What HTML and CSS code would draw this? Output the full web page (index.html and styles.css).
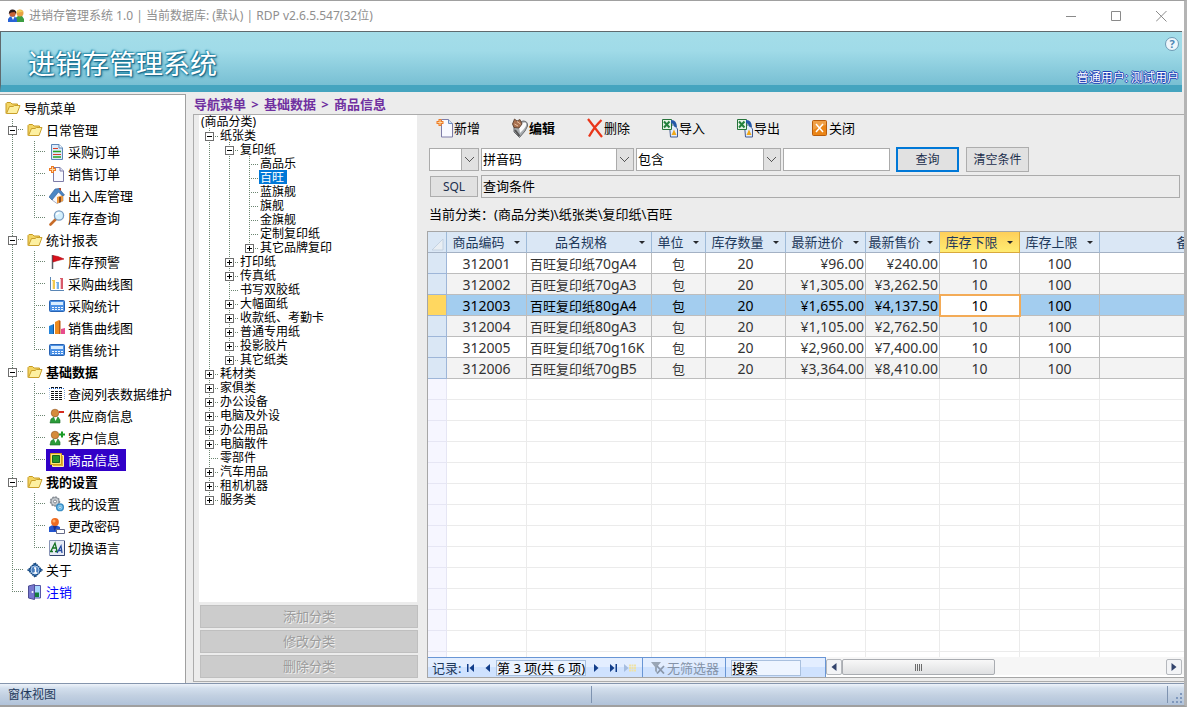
FILE: index.html
```html
<!DOCTYPE html>
<html lang="zh-CN">
<head>
<meta charset="utf-8">
<title>进销存管理系统</title>
<link rel="stylesheet" href="styles.css">
</head>
<body>
<svg class="sprite" aria-hidden="true">
  <symbol id="folder" viewBox="0 0 16 16"><path d="M1 13.500V3.500L2 2.500H5.500L7 4H12.500V6.500" fill="#f3d564" stroke="#c79b22"/><path d="M1.500 13.500L4.500 6.500H8L9.500 5.500H15L12 13.500Z" fill="#fdf0a0" stroke="#c99f2a"/></symbol>
  <symbol id="doc" viewBox="0 0 16 16"><path d="M2.500.500H10L13.500 4V15.500H2.500Z" fill="#dcebfa" stroke="#5d87b8"/><path d="M10 .500V4H13.500" fill="#fff" stroke="#5d87b8"/><path d="M4 4.500H9M4 10.500H12" stroke="#d6402b"/><path d="M4 7.500H12M4 13H12" stroke="#27a322" stroke-width="1.500"/></symbol>
  <symbol id="newdoc" viewBox="0 0 16 16"><path d="M4.500 1.500H11L14.500 5V15.500H4.500Z" fill="#f8f9ff" stroke="#7e7ca8"/><path d="M11 1.500V5H14.500" fill="#dfe4f5" stroke="#7e7ca8"/><path d="M3.500 0V7M0 3.500H7" stroke="#ee7b24" stroke-width="3"/><path d="M3.500 1V6M1 3.500H6" stroke="#ffd7a0"/></symbol>
  <symbol id="newitem" viewBox="0 0 18 20"><path d="M5.500 1.500H12.500L16.500 5.500V19H5.500Z" fill="#f8f9ff" stroke="#7e7ca8"/><path d="M12.500 1.500V5.500H16.500" fill="#cfe0f5" stroke="#6d8cc0"/><path d="M4 1V8M.500 4.500H7.500" stroke="#ee7b24" stroke-width="3"/><path d="M4 2V7M1.500 4.500H6.500" stroke="#ffd7a0"/></symbol>
  <symbol id="house" viewBox="0 0 16 16"><path d="M3 7L9 3L14 7V13L8 15.500L3 12Z" fill="#f7f7fb" stroke="#8994ad" stroke-width=".700"/><path d="M8 9L14 7V13L8 15.500Z" fill="#ef9a3c"/><path d="M0 9L6 1L10 .500L15.500 7L13.500 8L9.500 4L3 12Z" fill="#4a86c5" stroke="#315c92" stroke-width=".600"/><path d="M10 9H12V14L10 15Z" fill="#874b22"/><path d="M10 0H12V3L10 1Z" fill="#b7482c"/></symbol>
  <symbol id="lens" viewBox="0 0 16 16"><path d="M7 9L1.500 14.500" stroke="#c76c29" stroke-width="2.600" stroke-linecap="round"/><circle cx="10" cy="5.500" r="4.600" fill="#d5f0fd" stroke="#7a9dc1" stroke-width="1.300"/><path d="M7.500 5Q8 2.800 10.500 2.800" fill="none" stroke="#fff" stroke-width="1.500"/></symbol>
  <symbol id="flag" viewBox="0 0 16 16"><path d="M3.500 1V15" stroke="#5b5b63" stroke-width="1.500"/><path d="M4 1.500L9 2.500L15 5L9 6.500L4 8Z" fill="#d9101b" stroke="#b00814" stroke-width=".600"/></symbol>
  <symbol id="bars" viewBox="0 0 16 16"><path d="M1.500 1V14.500H15" fill="none" stroke="#5a86b5"/><path d="M3 4H6V13H3Z" fill="#f2c94e"/><path d="M7 6H10V13H7Z" fill="#79b3e8"/><path d="M11 2H14V13H11Z" fill="#d85a6a"/><path d="M3.500 5V13M7.500 7V13M11.500 3V13" stroke="#fff" opacity=".7"/></symbol>
  <symbol id="calc" viewBox="0 0 16 16"><rect x=".500" y="2.500" width="15" height="11" rx="1" fill="#4c91e5" stroke="#2763b4"/><path d="M2 4H14V7H2Z" fill="#d9edff"/><path d="M3 9.500H14M3 11.500H14" stroke="#f2f8ff" stroke-dasharray="2 1"/></symbol>
  <symbol id="chart" viewBox="0 0 16 16"><path d="M0 6L5 4V14H0Z" fill="#2384db"/><path d="M6 2L10 0V14H6Z" fill="#ee8c20"/><path d="M10 0L11.500 1V14H10Z" fill="#bb5b10"/><path d="M12 9L16 8V14H12Z" fill="#e84c8d"/><path d="M4 4L5 5V14H4Z" fill="#12569b"/></symbol>
  <symbol id="list" viewBox="0 0 16 16"><path d="M0 2.500H16" stroke="#1b61c5" stroke-dasharray="1 1"/><path d="M0 4V14M15.500 4V14" stroke="#7da3d8" stroke-dasharray="1 1"/><path d="M2 1.500H14M2 5.500H14M2 7.500H14M2 9.500H14M2 11.500H14M2 13.500H14" stroke="#111" stroke-dasharray="3 1"/></symbol>
  <symbol id="person" viewBox="0 0 16 16"><path d="M1 15L2 11L5 9H9L11 12V15Z" fill="#2b9c39" stroke="#176925" stroke-width=".600"/><path d="M5 9L6.500 13L8.500 9Z" fill="#fff"/><circle cx="6" cy="5" r="3.800" fill="#d58b3b" stroke="#8e501c" stroke-width=".600"/></symbol>
  <symbol id="supplier" viewBox="0 0 16 16"><use href="#person"/><path d="M10 4H15" stroke="#d62b1f" stroke-width="2"/></symbol>
  <symbol id="customer" viewBox="0 0 16 16"><use href="#person"/><path d="M10 4.500H16M13 1.500V7.500" stroke="#199b25" stroke-width="2"/></symbol>
  <symbol id="goods" viewBox="0 0 16 16"><path d="M3.500 3.500H14.500V14.500H3.500Z" fill="#e0b338" stroke="#fff2a6"/><path d="M1.500 1.500H12.500V12.500H1.500Z" fill="#ffe477" stroke="#d19b1b"/><path d="M3.500 3.500H10.500V10.500H3.500Z" fill="#23942b" stroke="#17641d"/></symbol>
  <symbol id="gears" viewBox="0 0 16 16"><circle cx="6" cy="5.500" r="4" fill="#ccd1d6" stroke="#9aa0a7" stroke-width="1.500"/><circle cx="6" cy="5.500" r="4.500" fill="none" stroke="#868d94" stroke-width="1.500" stroke-dasharray="1.500 1.500"/><circle cx="6" cy="5.500" r="1.500" fill="#fff" stroke="#7e858d"/><circle cx="11" cy="11.300" r="3.300" fill="#8cd2f5" stroke="#3a8ec6" stroke-width="1.500"/><circle cx="11" cy="11.300" r="1.200" fill="#fff" stroke="#287eb8" stroke-width=".600"/></symbol>
  <symbol id="password" viewBox="0 0 16 16"><path d="M0 14V9Q5 5 11 9V14Z" fill="#2455cf"/><path d="M4 8L5.500 13L8 8Z" fill="#1e308a"/><circle cx="6" cy="4" r="3.900" fill="#ed6b22"/><circle cx="5" cy="3" r="1.500" fill="#ffac65"/><path d="M7.500 11.500H15.500V15.500H7.500Z" fill="#fff" stroke="#666b88"/></symbol>
  <symbol id="language" viewBox="0 0 16 16"><path d="M.500.500H15.500V15.500H.500Z" fill="#e7ebf6" stroke="#8995b7"/><path d="M15.500 1V15.500H1" fill="none" stroke="#344470"/><path d="M2 11L6 3L8 11M3 8H8M1 11.500H4M6 11.500H9" fill="none" stroke="#177325" stroke-width="1.300"/><path d="M8 13L12 6L13 13M9.500 10.500H13" fill="none" stroke="#244aa0" stroke-width="1.300"/></symbol>
  <symbol id="about" viewBox="0 0 16 16"><path d="M8 1L15 8L8 15L1 8Z" fill="#205da0" stroke="#17477c" stroke-width="1.500" stroke-dasharray="1.500 .700"/><circle cx="8" cy="8" r="4" fill="#4c7fbd" stroke="#a9c8ec"/><path d="M7 6H8.500V11M6.500 11H10" fill="none" stroke="#fff" stroke-width="1.400"/></symbol>
  <symbol id="logout" viewBox="0 0 16 16"><path d="M7.500 1.500H13.500V14H7.500Z" fill="#a7d7ff" stroke="#5757a5"/><path d="M8 8.500H12V13H8Z" fill="#13803a"/><path d="M1.500 2L7.500.500V15.500L1.500 14Z" fill="#7777cf" stroke="#4c4c94"/><circle cx="5.500" cy="8" r="1" fill="#fff"/></symbol>
  <symbol id="users" viewBox="0 0 16 16"><path d="M7.500 14V10L10 8H14L16 11V14Z" fill="#3c9d42"/><circle cx="12" cy="5" r="3.500" fill="#e8a244"/><path d="M8.500 4Q10 0 15.500 3.500Q12 4 8.500 5Z" fill="#f0cf57"/><path d="M0 14V11L2 8.500H7L9 11V14Z" fill="#2863d6"/><path d="M3.500 9L5 12L6.500 9Z" fill="#fff"/><circle cx="4.500" cy="5.500" r="3.200" fill="#c76235"/><path d="M.800 6Q1 1 5 1.500Q9 2 8 6L6.500 4L3 4.500Z" fill="#2b1b1c"/></symbol>
  <symbol id="edit" viewBox="0 0 18 20"><path d="M3 7L12 3Q17 3 16.500 8L14 13L8.500 19.500L3 14Z" fill="#a9adb0" stroke="#6b6d70"/><path d="M8 9Q12 3 15 5Q16 8 12 12L9 15Z" fill="#fbfcfd"/><path d="M4 12L8.500 18" stroke="#555" stroke-width="2"/><path d="M3.500 1L6 3L9 1.500L11 6L8 10L3 9.500L1.500 6Z" fill="#a9704f" stroke="#50372a" stroke-width=".800"/><path d="M3.500 6L7 8M6 3.500L9.500 6" stroke="#e8c3a4"/></symbol>
  <symbol id="delete" viewBox="0 0 18 20"><path d="M2 1L16 19M15.500 2Q8 9 3 18.500" fill="none" stroke="#e9361a" stroke-width="2.200"/></symbol>
  <symbol id="excel" viewBox="0 0 18 20"><path d="M8.500 7H13L16.500 11V19H9.500Z" fill="#e2ecfb" stroke="#435b91"/><path d="M1.500 1.500H10.500V11.500H1.500Z" fill="#e7f4e8" stroke="#26733a"/><path d="M3 3.500L8.500 9.500M8.500 3.500L3 9.500" stroke="#23813d" stroke-width="2"/><path d="M10 2Q15.500 1.500 16 9H13.500Q13 5 10 5.500Z" fill="#2458a8"/><path d="M13 11.500L15.500 17H10.500Z" fill="#f0a719"/></symbol>
  <symbol id="close" viewBox="0 0 18 20"><rect x="1.500" y="2.500" width="14" height="15" rx="1" fill="#ea8517" stroke="#b85c0b"/><path d="M2 3H15V7Q8 8 2 12Z" fill="#f0a046"/><path d="M5 6L12 14M12 6L5 14" stroke="#fff" stroke-width="1.500"/></symbol>
  <symbol id="caret" viewBox="0 0 6 3"><path d="M0 0H6L3 3Z" fill="#26282c"/></symbol>
</svg>
<div class="window">
  <header class="titlebar">
    <svg class="icon"><use href="#users"/></svg>
    <span class="caption">进销存管理系统 1.0 | 当前数据库: (默认) | RDP v2.6.5.547(32位)</span>
    <button class="winbtn" aria-label="最小化"><svg viewBox="0 0 11 11"><path d="M0 5.500H10"/></svg></button>
    <button class="winbtn" aria-label="最大化"><svg viewBox="0 0 11 11"><path d="M.500.500H9.500V9.500H.500Z"/></svg></button>
    <button class="winbtn" aria-label="关闭窗口"><svg viewBox="0 0 11 11"><path d="M0 0L10.500 10.500M10.500 0L0 10.500"/></svg></button>
  </header>
  <div class="banner">
    <h1>进销存管理系统</h1>
    <div class="banner-side">
      <button class="help" aria-label="帮助">?</button>
      <a class="user" href="#user">普通用户: 测试用户</a>
    </div>
  </div>
  <div class="body">
    <nav class="nav">
      <a class="item root" href="#"><svg class="icon"><use href="#folder"/></svg>导航菜单</a>
      <ul class="tree">
        <li>
          <div class="row"><button class="toggle" aria-label="折叠"></button><a class="item" href="#"><svg class="icon"><use href="#folder"/></svg>日常管理</a></div>
          <ul>
            <li><a class="item" href="#"><svg class="icon"><use href="#doc"/></svg>采购订单</a></li>
            <li><a class="item" href="#"><svg class="icon"><use href="#newdoc"/></svg>销售订单</a></li>
            <li><a class="item" href="#"><svg class="icon"><use href="#house"/></svg>出入库管理</a></li>
            <li><a class="item" href="#"><svg class="icon"><use href="#lens"/></svg>库存查询</a></li>
          </ul>
        </li>
        <li>
          <div class="row"><button class="toggle" aria-label="折叠"></button><a class="item" href="#"><svg class="icon"><use href="#folder"/></svg>统计报表</a></div>
          <ul>
            <li><a class="item" href="#"><svg class="icon"><use href="#flag"/></svg>库存预警</a></li>
            <li><a class="item" href="#"><svg class="icon"><use href="#bars"/></svg>采购曲线图</a></li>
            <li><a class="item" href="#"><svg class="icon"><use href="#calc"/></svg>采购统计</a></li>
            <li><a class="item" href="#"><svg class="icon"><use href="#chart"/></svg>销售曲线图</a></li>
            <li><a class="item" href="#"><svg class="icon"><use href="#calc"/></svg>销售统计</a></li>
          </ul>
        </li>
        <li>
          <div class="row"><button class="toggle" aria-label="折叠"></button><a class="item strong" href="#"><svg class="icon"><use href="#folder"/></svg>基础数据</a></div>
          <ul>
            <li><a class="item" href="#"><svg class="icon"><use href="#list"/></svg>查阅列表数据维护</a></li>
            <li><a class="item" href="#"><svg class="icon"><use href="#supplier"/></svg>供应商信息</a></li>
            <li><a class="item" href="#"><svg class="icon"><use href="#customer"/></svg>客户信息</a></li>
            <li><a class="item current" href="#"><svg class="icon"><use href="#goods"/></svg>商品信息</a></li>
          </ul>
        </li>
        <li>
          <div class="row"><button class="toggle" aria-label="折叠"></button><a class="item strong" href="#"><svg class="icon"><use href="#folder"/></svg>我的设置</a></div>
          <ul>
            <li><a class="item" href="#"><svg class="icon"><use href="#gears"/></svg>我的设置</a></li>
            <li><a class="item" href="#"><svg class="icon"><use href="#password"/></svg>更改密码</a></li>
            <li><a class="item" href="#"><svg class="icon"><use href="#language"/></svg>切换语言</a></li>
          </ul>
        </li>
        <li><div class="row leaf"><a class="item" href="#"><svg class="icon"><use href="#about"/></svg>关于</a></div></li>
        <li><div class="row leaf"><a class="item logout" href="#"><svg class="icon"><use href="#logout"/></svg>注销</a></div></li>
      </ul>
    </nav>
    <main class="main">
      <div class="crumbs"><a href="#">导航菜单</a><span>&gt;</span><a href="#">基础数据</a><span>&gt;</span><a href="#">商品信息</a></div>
      <div class="form">
        <section class="categories">
          <div class="cats">
            <a class="top" href="#">(商品分类)</a>
            <ul>
              <li><div class="row"><button class="toggle" aria-label="折叠"></button><a href="#">纸张类</a></div>
                <ul>
                  <li><div class="row"><button class="toggle" aria-label="折叠"></button><a href="#">复印纸</a></div>
                    <ul>
                      <li><div class="row leaf"><a href="#">高品乐</a></div></li>
                      <li><div class="row leaf"><a class="chosen" href="#">百旺</a></div></li>
                      <li><div class="row leaf"><a href="#">蓝旗舰</a></div></li>
                      <li><div class="row leaf"><a href="#">旗舰</a></div></li>
                      <li><div class="row leaf"><a href="#">金旗舰</a></div></li>
                      <li><div class="row leaf"><a href="#">定制复印纸</a></div></li>
                      <li><div class="row"><button class="toggle plus" aria-label="展开"></button><a href="#">其它品牌复印</a></div></li>
                    </ul>
                  </li>
                  <li><div class="row"><button class="toggle plus" aria-label="展开"></button><a href="#">打印纸</a></div></li>
                  <li><div class="row"><button class="toggle plus" aria-label="展开"></button><a href="#">传真纸</a></div></li>
                  <li><div class="row leaf"><a href="#">书写双胶纸</a></div></li>
                  <li><div class="row"><button class="toggle plus" aria-label="展开"></button><a href="#">大幅面纸</a></div></li>
                  <li><div class="row"><button class="toggle plus" aria-label="展开"></button><a href="#">收款纸、考勤卡</a></div></li>
                  <li><div class="row"><button class="toggle plus" aria-label="展开"></button><a href="#">普通专用纸</a></div></li>
                  <li><div class="row"><button class="toggle plus" aria-label="展开"></button><a href="#">投影胶片</a></div></li>
                  <li><div class="row"><button class="toggle plus" aria-label="展开"></button><a href="#">其它纸类</a></div></li>
                </ul>
              </li>
              <li><div class="row"><button class="toggle plus" aria-label="展开"></button><a href="#">耗材类</a></div></li>
              <li><div class="row"><button class="toggle plus" aria-label="展开"></button><a href="#">家俱类</a></div></li>
              <li><div class="row"><button class="toggle plus" aria-label="展开"></button><a href="#">办公设备</a></div></li>
              <li><div class="row"><button class="toggle plus" aria-label="展开"></button><a href="#">电脑及外设</a></div></li>
              <li><div class="row"><button class="toggle plus" aria-label="展开"></button><a href="#">办公用品</a></div></li>
              <li><div class="row"><button class="toggle plus" aria-label="展开"></button><a href="#">电脑散件</a></div></li>
              <li><div class="row leaf"><a href="#">零部件</a></div></li>
              <li><div class="row"><button class="toggle plus" aria-label="展开"></button><a href="#">汽车用品</a></div></li>
              <li><div class="row"><button class="toggle plus" aria-label="展开"></button><a href="#">租机机器</a></div></li>
              <li><div class="row"><button class="toggle plus" aria-label="展开"></button><a href="#">服务类</a></div></li>
            </ul>
          </div>
          <div class="cat-actions">
            <button disabled>添加分类</button>
            <button disabled>修改分类</button>
            <button disabled>删除分类</button>
          </div>
        </section>
        <section class="detail">
          <div class="toolbar">
            <button><svg class="tool"><use href="#newitem"/></svg>新增</button>
            <button class="strong"><svg class="tool"><use href="#edit"/></svg>编辑</button>
            <button><svg class="tool"><use href="#delete"/></svg>删除</button>
            <button><svg class="tool"><use href="#excel"/></svg>导入</button>
            <button><svg class="tool"><use href="#excel"/></svg>导出</button>
            <button><svg class="tool"><use href="#close"/></svg>关闭</button>
          </div>
          <div class="filters">
            <div class="fields">
              <select class="logic" aria-label="逻辑"><option></option></select>
              <select class="field" aria-label="字段"><option>拼音码</option></select>
              <select class="operator" aria-label="运算符"><option>包含</option></select>
              <input class="value" type="text" aria-label="查询值">
            </div>
            <div class="commands">
              <button class="btn default">查询</button>
              <button class="btn">清空条件</button>
            </div>
          </div>
          <div class="sql">
            <button class="btn">SQL</button>
            <input type="text" value="查询条件" aria-label="查询条件" readonly>
          </div>
          <p class="path">当前分类：(商品分类)\纸张类\复印纸\百旺</p>
          <div class="sheet">
            <div class="grid">
              <table>
                <colgroup><col class="c-sel"><col class="c-std"><col class="c-name"><col class="c-unit"><col class="c-std"><col class="c-std"><col class="c-sale"><col class="c-std"><col class="c-std"><col class="c-note"></colgroup>
                <thead>
                  <tr>
                    <th class="corner"><svg viewBox="0 0 18 20"><path d="M15 7V18H4Z" fill="#e9eef3" stroke="#b9c9da" stroke-width=".700"/></svg></th>
                    <th><div>商品编码<svg><use href="#caret"/></svg></div></th>
                    <th><div>品名规格<svg><use href="#caret"/></svg></div></th>
                    <th><div>单位<svg><use href="#caret"/></svg></div></th>
                    <th><div>库存数量<svg><use href="#caret"/></svg></div></th>
                    <th><div>最新进价<svg><use href="#caret"/></svg></div></th>
                    <th><div>最新售价<svg><use href="#caret"/></svg></div></th>
                    <th class="hot"><div>库存下限<svg><use href="#caret"/></svg></div></th>
                    <th><div>库存上限<svg><use href="#caret"/></svg></div></th>
                    <th><div>备注<svg><use href="#caret"/></svg></div></th>
                  </tr>
                </thead>
                <tbody>
                  <tr><td></td><td>312001</td><td class="name">百旺复印纸<span>70gA4</span></td><td class="unit">包</td><td>20</td><td class="money">¥96.00</td><td class="money">¥240.00</td><td>10</td><td>100</td><td></td></tr>
                  <tr class="alt"><td></td><td>312002</td><td class="name">百旺复印纸<span>70gA3</span></td><td class="unit">包</td><td>20</td><td class="money">¥1,305.00</td><td class="money">¥3,262.50</td><td>10</td><td>100</td><td></td></tr>
                  <tr class="picked"><td></td><td>312003</td><td class="name">百旺复印纸<span>80gA4</span></td><td class="unit">包</td><td>20</td><td class="money">¥1,655.00</td><td class="money">¥4,137.50</td><td class="cursor">10</td><td>100</td><td></td></tr>
                  <tr class="alt"><td></td><td>312004</td><td class="name">百旺复印纸<span>80gA3</span></td><td class="unit">包</td><td>20</td><td class="money">¥1,105.00</td><td class="money">¥2,762.50</td><td>10</td><td>100</td><td></td></tr>
                  <tr><td></td><td>312005</td><td class="name">百旺复印纸<span>70g16K</span></td><td class="unit">包</td><td>20</td><td class="money">¥2,960.00</td><td class="money">¥7,400.00</td><td>10</td><td>100</td><td></td></tr>
                  <tr class="alt"><td></td><td>312006</td><td class="name">百旺复印纸<span>70gB5</span></td><td class="unit">包</td><td>20</td><td class="money">¥3,364.00</td><td class="money">¥8,410.00</td><td>10</td><td>100</td><td></td></tr>
                </tbody>
                <tbody class="blank"></tbody>
              </table>
            </div>
            <div class="sheetbar">
              <div class="records">
                <span class="lbl">记录:</span>
                <button aria-label="第一条"><svg viewBox="0 0 8 8"><path d="M0 0H1.500V8H0ZM7 0V8L2.500 4Z"/></svg></button>
                <button aria-label="上一条"><svg viewBox="0 0 8 8"><path d="M6 0V8L1.500 4Z"/></svg></button>
                <input class="position" type="text" value="第 3 项(共 6 项)" aria-label="当前记录">
                <button aria-label="下一条"><svg viewBox="0 0 8 8"><path d="M2 0V8L6.500 4Z"/></svg></button>
                <button aria-label="最后一条"><svg viewBox="0 0 8 8"><path d="M1 0V8L5.500 4ZM6.500 0H8V8H6.500Z"/></svg></button>
                <button class="add" aria-label="新记录" disabled><svg viewBox="0 0 12 8"><path d="M0 0V8L4.500 4Z" fill="#a5bde0"/><path d="M5 1.500H12M5 4H12M5 6.500H12" stroke="#eee2a8" stroke-width="2" stroke-dasharray="2 .500"/></svg></button>
              </div>
              <button class="nofilter" disabled><svg viewBox="0 0 14 12"><path d="M0 0H10L6 5V11L4 9V5Z" fill="#9aa6b5"/><path d="M6 4L13 11.500M13 4L6 11.500" stroke="#8b98ab" stroke-width="1.800"/></svg>无筛选器</button>
              <div class="search"><input type="text" value="搜索" aria-label="搜索"></div>
              <div class="scroll">
                <button aria-label="向左滚动"><svg viewBox="0 0 8 8"><path d="M6.500 0V8L1.500 4Z"/></svg></button>
                <div class="track"><div class="thumb"></div></div>
                <button aria-label="向右滚动"><svg viewBox="0 0 8 8"><path d="M1.500 0V8L6.500 4Z"/></svg></button>
              </div>
            </div>
          </div>
        </section>
      </div>
    </main>
  </div>
  <footer class="status">
    <span class="view">窗体视图</span>
    <span class="pane"></span>
    <svg class="grip" viewBox="0 0 12 12"><path d="M8 0H10V2H8ZM4 4H6V6H4ZM8 4H10V6H8ZM0 8H2V10H0ZM4 8H6V10H4ZM8 8H10V10H8Z" fill="#7f98bd"/></svg>
  </footer>
</div>
<script src="script.js"></script>
</body>
</html>
```
FILE: script.js
```js
// Fill the rest of the datasheet with empty ruled rows.
const blank = document.querySelector('.blank');
const columns = document.querySelectorAll('colgroup col').length;
const rowHeight = 21;
const grid = document.querySelector('.grid');
const used = document.querySelector('table').offsetHeight;
const count = Math.ceil((grid.clientHeight - used) / rowHeight);
for (let i = 0; i < count; i++) {
  const row = blank.insertRow();
  for (let c = 0; c < columns; c++) row.insertCell();
}
```
FILE: styles.css
```css
* { box-sizing: border-box; }
body {
  margin: 0;
  background: #c9c7c9;
  color: #000;
  font: 13px/18px "Noto Sans", "Noto Sans CJK SC", sans-serif;
}
button, input, select { font: inherit; color: inherit; margin: 0; padding: 0; border-radius: 0; }
button { border: 0; background: none; white-space: nowrap; }
a { color: inherit; text-decoration: none; }
ul { list-style: none; margin: 0; padding: 0; }
svg { display: block; flex: none; }
.sprite { position: absolute; width: 0; height: 0; }
.icon { width: 16px; height: 16px; }

.window {
  height: 100vh;
  display: flex;
  flex-direction: column;
  border-style: solid;
  border-color: #a0a0a0;
  border-width: 1px 3px 2px 0;
  border-right-color: #b4b4b4;
  background: #ececec;
}

.titlebar {
  display: flex;
  align-items: center;
  height: 30px;
  flex: none;
  padding-left: 8px;
  background: #fff;
  color: #8f8f8f;
  font-size: 12px;
}
.caption { flex: 1; padding-left: 5px; white-space: nowrap; }
.winbtn { width: 45px; height: 28px; display: grid; place-items: center; }
.winbtn svg { width: 11px; height: 11px; fill: none; stroke: #8a8a8a; }

.banner {
  display: flex;
  justify-content: space-between;
  flex: none;
  height: 61px;
  margin-right: 2px;
  border-top: 1px solid #5f6a6e;
  border-left: 1px solid #5f6a6e;
  border-bottom: 7px solid #45a4bf;
  background: linear-gradient(#a4dde9, #a0dbe8 35%, #78bfd3);
}
.banner h1 {
  margin: 0;
  padding: 12px 0 0 27px;
  color: #fff;
  font-size: 27px;
  line-height: 40px;
  font-weight: 400;
  text-shadow: 0 0 3px #1d7f9f, 1px 1px 1px #1c5f80, -1px -1px 1px #3a9cb8, 1px 1px 3px #2586a5;
}
.banner-side { display: flex; flex-direction: column; align-items: flex-end; padding: 5px 3px 0 0; gap: 18px; }
.help {
  width: 14px;
  height: 14px;
  border: 1px solid #6d9ab5;
  border-radius: 50%;
  background: #eef6fb;
  color: #4d86b4;
  font-size: 11px;
  line-height: 12px;
  font-weight: 700;
}
.user {
  color: #fff;
  font-size: 12px;
  line-height: 18px;
  text-shadow: 1px 0 #2440b8, -1px 0 #2440b8, 0 1px #2440b8, 0 -1px #2440b8;
}

.body { flex: 1; min-height: 0; display: flex; padding-top: 2px; }

.nav {
  width: 186px;
  flex: none;
  padding-top: 2px;
  border-top: 1px solid #a0a0a0;
  border-right: 1px solid #a0a0a0;
  background: #fff;
  overflow: hidden;
}
.item {
  display: inline-flex;
  align-items: center;
  gap: 3px;
  height: 22px;
  padding: 0 6px 0 3px;
  white-space: nowrap;
}
.nav .root { padding-left: 5px; display: flex; }
.strong { font-weight: 700; }
.current { background: #3100c8; color: #fff; }
.logout { color: #00f; }
.nav .row { display: flex; align-items: center; height: 22px; padding-left: 8px; gap: 7px; }
.nav .leaf { padding-left: 24px; }
.tree li, .cats li {
  background-repeat: no-repeat;
  background-image:
    repeating-linear-gradient(to bottom, #6b8570 0 1px, transparent 1px 2px),
    repeating-linear-gradient(to right, #6b8570 0 1px, transparent 1px 2px);
}
.tree > li { background-size: 1px 100%, 12px 1px; background-position: 12px 0, 12px 10px; }
.tree > li:last-child { background-size: 1px 11px, 12px 1px; }
.tree ul { margin-left: 34px; }
.tree ul li { height: 22px; padding-left: 12px; background-size: 1px 100%, 12px 1px; background-position: 0 0, 0 10px; }
.tree ul li:last-child { background-size: 1px 11px, 12px 1px; }
.toggle {
  width: 9px;
  height: 9px;
  flex: none;
  border: 1px solid #6e6e6e;
  background: linear-gradient(#000, #000) center / 5px 1px no-repeat #fff;
}
.plus {
  background:
    linear-gradient(#000, #000) center / 5px 1px no-repeat,
    linear-gradient(#000, #000) center / 1px 5px no-repeat #fff;
}

.main { flex: 1; min-width: 0; display: flex; flex-direction: column; padding: 0 0 1px 7px; }
.crumbs { display: flex; height: 20px; line-height: 20px; padding-left: 1px; color: #7030a0; font-weight: 700; }
.crumbs span { width: 18px; text-align: center; }
.form {
  flex: 1;
  min-height: 0;
  display: flex;
  gap: 9px;
  padding: 0 0 3px 5px;
  border: 1px solid #acacac;
  border-right: 0;
}

.categories { width: 219px; flex: none; display: flex; flex-direction: column; gap: 3px; }
.cats { flex: 1; min-height: 0; margin-right: 1px; background: #fff; overflow: hidden; font-size: 12px; line-height: 13px; }
.cats a { height: 14px; padding: 1px 3px 0 1px; white-space: nowrap; }
.cats .top { display: block; height: 13px; padding: 0 0 0 2px; }
.cats ul { margin-left: 20px; }
.cats .top + ul { margin-left: 10px; }
.cats li { background-size: 1px 100%, 9px 1px; background-position: 0 0, 0 8px; }
.cats li:last-child { background-size: 1px 9px, 9px 1px; }
.cats .row { display: flex; height: 14px; gap: 5px; margin-left: -4px; }
.cats .toggle { margin-top: 4px; }
.cats .leaf { padding-left: 14px; }
.cats .chosen { background: #0078d7; color: #fff; }
.cat-actions { display: grid; gap: 2px; margin-left: 1px; }
.cat-actions button {
  height: 23px;
  padding-bottom: 2px;
  border: 1px solid #bfbfbf;
  background: #ccc;
  color: #9c9c9c;
  text-shadow: 1px 1px #f0f0f0;
}

.detail { flex: 1; min-width: 0; display: flex; flex-direction: column; }
.toolbar { display: flex; height: 25px; padding-left: 9px; margin-bottom: 7px; }
.toolbar button { display: flex; align-items: center; width: 75px; }
.tool { width: 18px; height: 20px; }
.filters { display: flex; align-items: center; gap: 6px; padding-left: 2px; margin-bottom: 3px; }
.fields { display: flex; gap: 2px; }
.commands { display: flex; gap: 7px; }
select, .value, .sql input { height: 23px; border: 1px solid #ababab; background: #fff; padding: 0 1px 2px; outline: 0; }
select {
  appearance: none;
  background-image:
    linear-gradient(45deg, transparent 46%, #555 46% 58%, transparent 58%),
    linear-gradient(-45deg, transparent 46%, #555 46% 58%, transparent 58%),
    linear-gradient(#ababab, #ababab),
    linear-gradient(#e1e1e1, #e1e1e1);
  background-repeat: no-repeat;
  background-size: 5px 5px, 5px 5px, 1px 100%, 16px 100%;
  background-position: right 8px center, right 4px center, right 16px center, right center;
}
.logic { width: 50px; }
.field { width: 153px; }
.operator { width: 145px; }
.value { width: 107px; }
.btn { border: 1px solid #adadad; background: #e1e1e1; color: #1c2f4d; font-size: 12px; }
.commands .btn { width: 63px; height: 25px; }
.commands .default { border: 2px solid #0078d7; }
.sql { display: flex; align-items: center; gap: 3px; padding: 0 4px 0 3px; margin-bottom: 7px; }
.sql .btn { width: 48px; height: 21px; }
.sql input { flex: 1; min-width: 0; background: #ececec; }
.path { margin: 0 0 8px; padding-left: 2px; }

.sheet { flex: 1; min-height: 0; display: flex; flex-direction: column; border: 1px solid #a6a6a6; border-right: 0; background: #fff; }
.grid { flex: 1; min-height: 0; overflow: hidden; }
table { table-layout: fixed; width: 868px; border-spacing: 0; }
.c-sel { width: 19px; }
.c-std { width: 80px; }
.c-name { width: 125px; }
.c-unit { width: 54px; }
.c-sale { width: 74px; }
.c-note { width: 196px; }
th, td { height: 21px; padding: 0; border: solid #bdbdbd; border-width: 0 1px 1px 0; line-height: 20px; text-align: center; white-space: nowrap; }
th { background: #dae7f5; border-color: #9ebad8; border-bottom-color: #a3b1c4; color: #1e395b; font-weight: 400; }
th div { display: flex; align-items: center; justify-content: center; padding-right: 6px; }
th div svg { width: 10px; height: 3px; padding-left: 4px; margin-left: auto; }
th div::before { content: ""; margin-left: auto; }
.corner svg { width: 18px; height: 20px; }
.hot { background: linear-gradient(#fecf5a, #ffec72); border-color: #d9a93c; }
td { padding-top: 2px; line-height: 18px; color: #333; font-size: 14px; }
td:first-child { background: #dae7f5; border-color: #9eb6d8; }
.alt td:not(:first-child) { background: #f3f3f3; }
.picked td { background: #a3cdef; color: #000; }
.picked td:first-child { background: #ffd760; }
.picked .cursor { background: #fff; outline: 2px solid #f3ab57; outline-offset: -1px; position: relative; }
.name { font-size: 13px; text-align: left; padding-left: 3px; }
.name span { font-size: 14px; line-height: 16px; }
.unit { font-size: 13px; }
.money { text-align: right; padding-right: 1px; }
.blank td { border-color: #ebebeb; }
.blank td:first-child { background: #f6f6ff; border-color: #e6e6f4; }

.sheetbar { display: flex; height: 20px; flex: none; }
.records, .nofilter, .search {
  display: flex;
  align-items: center;
  border: solid #6996d5;
  border-width: 1px 1px 0 0;
  background: linear-gradient(#e3eeff 0 45%, #cfe2fe 45%);
}
.records { width: 215px; padding-left: 4px; color: #1e395b; }
.records .lbl { width: 30px; }
.records button { width: 17px; height: 16px; display: grid; place-items: center; }
.records svg { width: 8px; height: 8px; fill: #123e8a; }
.records .add svg { width: 12px; }
.records .position { width: 90px; height: 16px; border: 1px solid #a9c0de; background: #eaf3ff; color: #000; line-height: 14px; margin-right: 1px; }
.nofilter { width: 83px; padding-left: 8px; gap: 2px; color: #8593a8; }
.nofilter svg { width: 14px; height: 12px; }
.search { width: 100px; padding-left: 5px; }
.search input { width: 70px; height: 16px; border: 1px solid #a9c0de; background: #eef5ff; line-height: 14px; }
.scroll { flex: 1; display: flex; height: 18px; padding: 2px 2px 0 0; background: #f6f6f6; }
.scroll button { width: 16px; border: 1px solid #b5b8bd; border-radius: 2px; background: #f3f4f6; display: grid; place-items: center; }
.scroll svg { width: 8px; height: 8px; fill: #34456d; }
.track { flex: 1; display: flex; }
.thumb {
  width: 153px;
  border: 1px solid #a9acb1;
  border-radius: 2px;
  background:
    repeating-linear-gradient(to right, #6b6b6b 0 1px, transparent 1px 2px) center / 8px 7px no-repeat,
    linear-gradient(#f8f8f8, #dfe0e2);
}

.status {
  flex: none;
  display: flex;
  align-items: center;
  height: 22px;
  padding-left: 8px;
  border-top: 1px solid #8595ad;
  background: linear-gradient(#eef3fa, #d3dfed 20%, #c2d0e1 55%, #b1c3da);
  color: #1e395b;
  font-size: 12px;
}
.view { flex: 1 0 8px; }
.pane { flex: 1 0 0; align-self: stretch; margin: 2px 4px 2px 0; border: solid #7e93b0; border-width: 0 1px; }
.grip { width: 12px; height: 12px; align-self: flex-end; }
```
